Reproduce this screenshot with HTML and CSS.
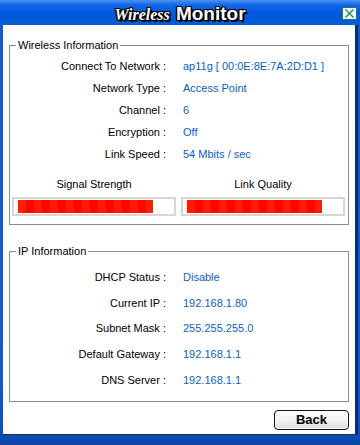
FILE: index.html
```html
<!DOCTYPE html>
<html lang="en">
<head>
  <meta charset="UTF-8">
  <meta name="viewport" content="width=device-width, initial-scale=1">
  <link rel="stylesheet" href="styles.css">
</head>
<body>

<div class="window">
  <!-- Title bar -->
  <div class="titlebar">
    <span></span>
    <h1 class="title"><em>Wireless</em> <strong>Monitor</strong></h1>
    <span class="close-btn">
      <svg width="15" height="13" viewBox="0 0 15 13">
        <rect x="0.5" y="0.5" width="14" height="12" fill="#eef8f4" stroke="#2d6e68"/>
        <path d="M3.5 2.5 L11.5 10.5 M11.5 2.5 L3.5 10.5" stroke="#1d8c6c" stroke-width="1.3"/>
      </svg>
    </span>
  </div>

  <div class="client">
    <fieldset class="group wireless">
      <legend>Wireless Information</legend>
      <div class="rows">
        <span class="label">Connect To Network :</span><span class="value">ap11g [ 00:0E:8E:7A:2D:D1 ]</span>
        <span class="label">Network Type :</span><span class="value">Access Point</span>
        <span class="label">Channel :</span><span class="value">6</span>
        <span class="label">Encryption :</span><span class="value">Off</span>
        <span class="label">Link Speed :</span><span class="value">54 Mbits / sec</span>
      </div>
      <div class="meters">
        <div class="meter">
          <div class="meter-label">Signal Strength</div>
          <div class="meter-box"><div class="meter-fill" style="width:89%"></div></div>
        </div>
        <div class="meter">
          <div class="meter-label">Link Quality</div>
          <div class="meter-box"><div class="meter-fill" style="width:89%"></div></div>
        </div>
      </div>
    </fieldset>

    <fieldset class="group ip">
      <legend>IP Information</legend>
      <div class="rows">
        <span class="label">DHCP Status :</span><span class="value">Disable</span>
        <span class="label">Current IP :</span><span class="value">192.168.1.80</span>
        <span class="label">Subnet Mask :</span><span class="value">255.255.255.0</span>
        <span class="label">Default Gateway :</span><span class="value">192.168.1.1</span>
        <span class="label">DNS Server :</span><span class="value">192.168.1.1</span>
      </div>
    </fieldset>

    <div class="actions">
      <button class="back-btn">Back</button>
    </div>
  </div>
</div>

</body>
</html>
```

FILE: styles.css
```css
* {
  box-sizing: border-box;
}

body {
  margin: 0;
  font-family: 'Liberation Sans', Arial, sans-serif;
  font-size: 11px;
  color: #000;
  background: #0a55d0;
}

.window {
  width: 360px;
  height: 445px;
  display: flex;
  flex-direction: column;
  background: linear-gradient(#4a93f4 0, #1466e6 5px, #0058dc 14px, #0a5bd6 26px, #0b5dd5 380px, #0a52c2 430px, #0c45a6 445px);
}

/* Title bar */
.titlebar {
  height: 25px;
  display: grid;
  grid-template-columns: 1fr auto 1fr;
  align-items: center;
}

.title {
  margin: 0;
  color: #fff;
  white-space: nowrap;
  line-height: 25px;
  text-shadow:
    -1px -1px 0 #000, 1px -1px 0 #000, -1px 1px 0 #000, 1px 1px 0 #000,
    0 -1px 0 #000, 0 1px 0 #000, -1px 0 0 #000, 1px 0 0 #000,
    2px 2px 0 #000;
}

.title em {
  font-family: 'Liberation Serif', 'Times New Roman', serif;
  font-style: italic;
  font-weight: bold;
  font-size: 16px;
}

.title strong {
  font-family: 'Liberation Sans', Arial, sans-serif;
  font-weight: bold;
  font-size: 19px;
}

.close-btn {
  justify-self: end;
  display: flex;
  margin-right: 3px;
}

/* Client area */
.client {
  flex: 1;
  margin: 0 2px 10px 3px;
  padding: 13px 6px 0;
  background: #fff;
  border-right: 3px solid #0b2d62;
  border-bottom: 1px solid #1f2f4a;
  display: flex;
  flex-direction: column;
}

.group {
  margin: 0;
  padding: 0;
  min-width: 0;
  border: 1px solid #8c8c8c;
}

.group legend {
  margin-left: 6px;
  padding: 0 2px;
  line-height: 14px;
}

.rows {
  display: grid;
  grid-template-columns: 156px 1fr;
  column-gap: 17px;
  align-items: center;
}

.label {
  text-align: right;
}

.value {
  color: #0a5fc8;
  white-space: nowrap;
}

.wireless {
  padding-bottom: 8px;
}

.wireless .rows {
  grid-auto-rows: 22px;
  padding-top: 3px;
}

.ip {
  margin-top: 19px;
  padding-bottom: 8px;
}

.ip .rows {
  grid-auto-rows: 25.75px;
  padding-top: 6px;
}

/* Meters */
.meters {
  display: grid;
  grid-template-columns: 1fr 1fr;
  column-gap: 5px;
  margin: 12px 3px 0 2px;
}

.meter-label {
  text-align: center;
  line-height: 14px;
  margin-bottom: 6px;
}

.meter-box {
  height: 19px;
  border: 2px solid #d6d6d6;
  padding: 1px 4px;
}

.meter-fill {
  height: 100%;
  background: repeating-linear-gradient(90deg, #ff1e00 0 8px, #ff0500 8px 16px);
}

/* Back button */
.actions {
  display: flex;
  justify-content: flex-end;
  margin-top: 8px;
}

.back-btn {
  width: 75px;
  height: 20px;
  padding: 0;
  font-family: 'Liberation Sans', Arial, sans-serif;
  font-size: 13px;
  font-weight: bold;
  color: #000;
  border: 1px solid #111;
  border-radius: 4px;
  background: linear-gradient(#ffffff, #f2f2f2 50%, #dcdcdc);
  box-shadow: inset 0 0 0 1px #fff;
}
```
